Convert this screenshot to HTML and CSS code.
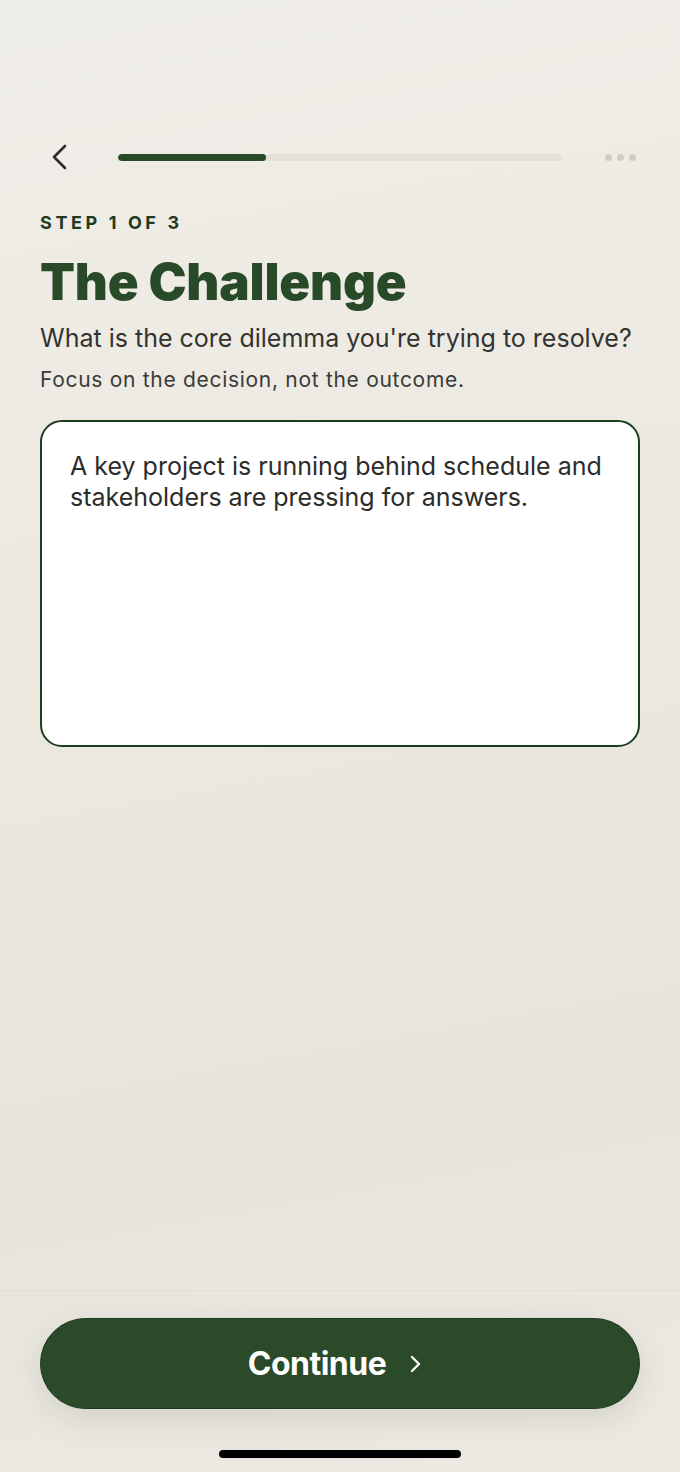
FILE: index.html
```html
<!DOCTYPE html>
<html lang="en">
<head>
<meta charset="utf-8">
<title>The Challenge</title>
<link rel="stylesheet" href="styles.css">
</head>
<body>
<div class="screen">
  <main class="content">
    <header class="topbar">
      <button class="back" aria-label="Back">
        <svg width="18" height="26" viewBox="0 0 18 26"><path d="M14 2 L3 13 L14 24" fill="none" stroke="#2b2b2b" stroke-width="2.6" stroke-linecap="round" stroke-linejoin="round"/></svg>
      </button>
      <div class="progress"><div class="progress-fill" style="width:33.3%"></div></div>
      <div class="more"><span></span><span></span><span></span></div>
    </header>
    <p class="step">STEP 1 OF 3</p>
    <h1 class="title">The Challenge</h1>
    <p class="question">What is the core dilemma you're trying to resolve?</p>
    <p class="hint">Focus on the decision, not the outcome.</p>
    <div class="answer">A key project is running behind schedule and stakeholders are pressing for answers.</div>
  </main>
  <footer class="footer">
    <button class="continue">Continue
      <svg width="14" height="20" viewBox="0 0 14 20"><path d="M4 3 L11 10 L4 17" fill="none" stroke="#fff" stroke-width="2.4" stroke-linecap="round" stroke-linejoin="round"/></svg>
    </button>
    <div class="home"></div>
  </footer>
</div>
</body>
</html>
```
FILE: styles.css
```css
* { box-sizing: border-box; }
html, body { margin: 0; padding: 0; }
body {
  font-family: Inter, "Noto Sans", "Liberation Sans", sans-serif;
  background: linear-gradient(170deg, #f0eee8 0%, #ebe8e0 45%, #e7e4dc 75%, #ece9e2 100%);
  width: 680px;
  height: 1472px;
  overflow: hidden;
}
.screen {
  height: 1472px;
  display: flex;
  flex-direction: column;
}
.content {
  flex: 1;
  padding: 140px 40px 0;
}
.topbar {
  display: flex;
  align-items: center;
  height: 34px;
}
.back {
  border: 0;
  background: none;
  padding: 0;
  margin-left: 11px;
  width: 18px;
  height: 26px;
  display: flex;
}
.progress {
  margin-left: 49px;
  width: 444px;
  height: 7px;
  border-radius: 4px;
  background: #e3e0d8;
  overflow: hidden;
}
.progress-fill {
  height: 100%;
  background: #284a28;
  border-radius: 4px;
}
.more {
  margin-left: 43px;
  display: flex;
  gap: 5px;
}
.more span {
  width: 7px;
  height: 7px;
  border-radius: 50%;
  background: #d0cdc6;
}
.step {
  margin: 38px 0 0;
  font-size: 18px;
  line-height: 22px;
  font-weight: 700;
  letter-spacing: 3.6px;
  color: #1f3a1f;
}
.title {
  margin: 20px 0 0;
  font-size: 51px;
  line-height: 56px;
  font-weight: 900;
  letter-spacing: -0.2px;
  color: #284a28;
}
.question {
  margin: 13px 0 0;
  font-size: 25px;
  line-height: 30px;
  color: #333330;
}
.hint {
  margin: 14px 0 0;
  font-size: 21px;
  line-height: 26px;
  letter-spacing: 0.7px;
  color: #3a3a37;
}
.answer {
  margin-top: 27px;
  height: 327px;
  background: #fff;
  border: 2.5px solid #1e3d1e;
  border-radius: 22px;
  padding: 29px 28px 25px;
  font-size: 25px;
  line-height: 31px;
  color: #2c2c2a;
  letter-spacing: 0;
}
.footer {
  border-top: 1px solid #e1ded6;
  padding: 27px 40px 0;
  height: 182px;
  display: flex;
  flex-direction: column;
  align-items: center;
}
.continue {
  width: 600px;
  height: 91px;
  border: 1px solid #1f3a1f;
  border-radius: 46px;
  background: #2b4a2a;
  color: #fff;
  font-family: Inter, "Noto Sans", sans-serif;
  font-size: 32px;
  font-weight: 700;
  letter-spacing: -0.5px;
  display: flex;
  align-items: center;
  justify-content: center;
  gap: 22px;
  padding: 0 10px 0 0;
  box-shadow: 0 10px 30px rgba(60, 60, 40, 0.12);
}
.home {
  margin-top: 41px;
  width: 242px;
  height: 8px;
  border-radius: 4px;
  background: #000;
}
```
